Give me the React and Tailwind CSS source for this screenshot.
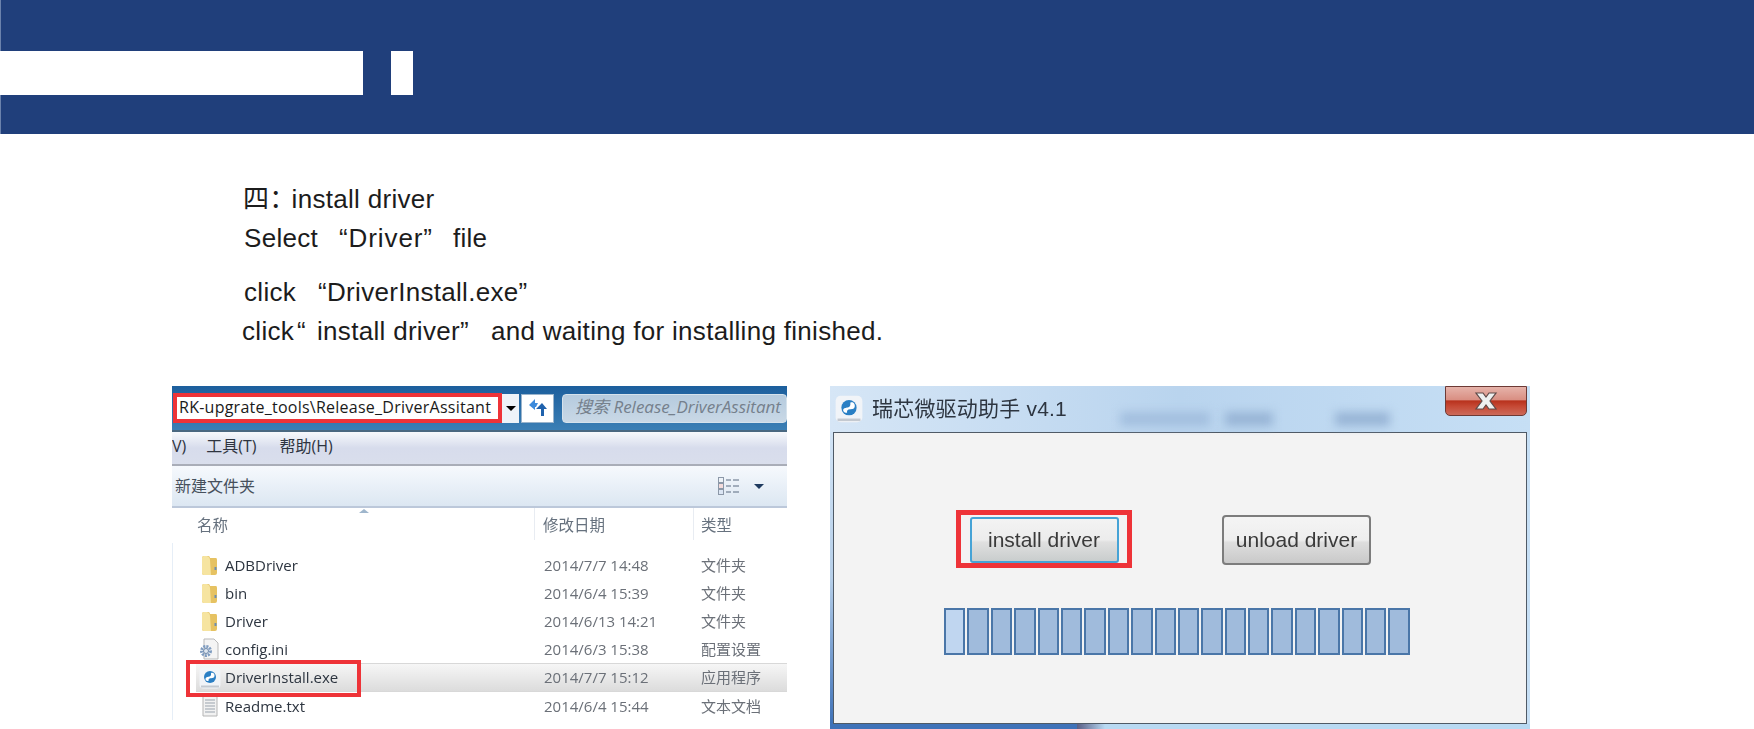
import React from "react";

const uiFont = "font-['Open_Sans','Noto_Sans_CJK_SC',sans-serif]";

const files = [
  { name: "ADBDriver", date: "2014/7/7 14:48", type: "文件夹", icon: "folder" },
  { name: "bin", date: "2014/6/4 15:39", type: "文件夹", icon: "folder" },
  { name: "Driver", date: "2014/6/13 14:21", type: "文件夹", icon: "folder" },
  { name: "config.ini", date: "2014/6/3 15:38", type: "配置设置", icon: "config" },
  { name: "DriverInstall.exe", date: "2014/7/7 15:12", type: "应用程序", icon: "exe", selected: true },
  { name: "Readme.txt", date: "2014/6/4 15:44", type: "文本文档", icon: "text" },
];

const FolderIcon = () => (
  <svg width="17" height="21" viewBox="0 0 17 21">
    <path d="M1 3 Q1 1 3 1 L7 1 Q9 1 9 3 L15 3 Q16 3 16 5 L16 18 Q16 20 14 20 L3 20 Q1 20 1 18 Z" fill="#e6c262" />
    <path d="M1 3 Q1 1 3 1 L6 1 Q9 2 9 5 L10 20 L3 20 Q1 20 1 18 Z" fill="#f6e4a0" />
    <rect x="13.5" y="12" width="2" height="3" fill="#6d8db0" />
  </svg>
);

const ConfigIcon = () => (
  <svg width="20" height="22" viewBox="0 0 20 22">
    <path d="M5 1 H15 L19 5 V21 H5 Z" fill="#f4f4f4" stroke="#b9b9b9" />
    <circle cx="7" cy="13" r="4.5" fill="none" stroke="#7f9cc0" strokeWidth="3" strokeDasharray="2 1" />
    <circle cx="7" cy="13" r="2.5" fill="#dfe7f0" stroke="#6d88aa" />
  </svg>
);

const ExeIcon = ({ size = 22 }) => (
  <svg width={size} height={size} viewBox="0 0 22 22">
    <rect x="0.5" y="0.5" width="21" height="21" rx="4" fill="#f1f4f8" />
    <circle cx="11" cy="10" r="6" fill="#2a7fc4" />
    <path d="M6.5 12.5 C6 8 13 12 12 6 C14 5 16 7 15.5 9 C15 13 9 9 9.5 14 C8 14 7 13.5 6.5 12.5 Z" fill="#ffffff" />
    <rect x="2" y="18.5" width="18" height="2" fill="#c4c9d0" />
  </svg>
);

const TextIcon = () => (
  <svg width="18" height="22" viewBox="0 0 18 22">
    <path d="M2 1 H16 V21 H2 Z" fill="#f2f2f2" stroke="#b5b5b5" />
    <path d="M4 5 H14 M4 8 H14 M4 11 H14 M4 14 H14 M4 17 H14" stroke="#9aa3ad" />
  </svg>
);

const RefreshIcon = () => (
  <svg width="20" height="20" viewBox="0 0 20 20">
    <path d="M1 7 L7 1 L7 5 L10 5 L8 9 L7 9 L7 12 Z" fill="#3d8bdc" />
    <path d="M8 11 L14 5 L19 11 L16 11 L16 18 L13 18 L13 11 Z" fill="#1f62ad" />
  </svg>
);

const ViewIcon = () => (
  <svg width="22" height="18" viewBox="0 0 22 18">
    <rect x="0.5" y="0.5" width="5" height="5" fill="#eef3f8" stroke="#8c98a8" />
    <rect x="0.5" y="6.5" width="5" height="5" fill="#f4dcdc" stroke="#8c98a8" />
    <rect x="0.5" y="12.5" width="5" height="5" fill="#dce6f4" stroke="#8c98a8" />
    <path d="M8 3 H13 M15 3 H21 M8 9 H13 M15 9 H21 M8 15 H13 M15 15 H21" stroke="#5a6a80" />
  </svg>
);

const CloseGlyph = () => (
  <svg width="26" height="18" viewBox="0 0 26 18">
    <path d="M3 1 H10 L13 5 L16 1 H23 L17 9 L23 17 H16 L13 13 L10 17 H3 L9 9 Z" fill="#eef0f0" stroke="#5e4a48" strokeWidth="1.2" />
  </svg>
);

const FileIcon = ({ type }) => {
  if (type === "folder") return <FolderIcon />;
  if (type === "config") return <div className="-ml-[2px]"><ConfigIcon /></div>;
  if (type === "exe") return <div className="-ml-[2px]"><ExeIcon /></div>;
  return <TextIcon />;
};

const FileRow = ({ file }) => (
  <div
    className={`flex items-center text-[15px] ${
      file.selected
        ? "h-[29px] ml-[23px] pl-[5px] bg-gradient-to-b from-[#f6f6f6] to-[#dcdcdc] border-y border-[#d8d8d8]"
        : "h-[28px] ml-[28px]"
    }`}
  >
    <div className="w-[24px] flex justify-start shrink-0">
      <FileIcon type={file.icon} />
    </div>
    <span className="w-[319px] shrink-0 text-[#2d3540]">{file.name}</span>
    <span className="w-[157px] shrink-0 text-[#6b7078]">{file.date}</span>
    <span className="text-[#6b7078]">{file.type}</span>
  </div>
);

const ExplorerShot = () => (
  <div className="w-[615px] h-[343px] overflow-hidden bg-white">
    <div className={`h-[343px] flex flex-col blur-[0.4px] ${uiFont}`}>
      {/* address bar */}
      <div className="h-[46px] shrink-0 bg-gradient-to-b from-[#1c5f9d] to-[#3b7fb5] border-b-2 border-[#4a6880] flex items-center pl-px">
        <div className="w-[329px] h-[30px] pl-[2px] pb-[2px] bg-white border-[4px] border-[#ee3338] flex items-center text-[16px] text-[#1a1a1a] tracking-[0.25px] whitespace-nowrap overflow-hidden">
          RK-upgrate_tools\Release_DriverAssitant
        </div>
        <div className="w-[17px] h-[29px] bg-[#eef3f8] flex items-center justify-center">
          <div className="w-0 h-0 border-x-[5px] border-x-transparent border-t-[5px] border-t-black" />
        </div>
        <div className="ml-[2px] w-[33px] h-[29px] bg-white border border-[#9ab4cc] flex items-center justify-center">
          <RefreshIcon />
        </div>
        <div className="ml-[8px] flex-1 h-[29px] bg-gradient-to-b from-[#b5cbde] to-[#c9d8e6] border border-[#d5e2ec] rounded-sm flex items-center pl-[12px] pb-[2px] text-[17px] italic text-[#75808c] whitespace-nowrap overflow-hidden">
          搜索 Release_DriverAssitant
        </div>
      </div>
      {/* menu */}
      <div className="h-[34px] shrink-0 pb-[4px] bg-gradient-to-b from-[#f7f9fc] via-[#d7dcec] to-[#d9deec] border-b-2 border-[#a9adb8] flex items-center text-[16px] text-[#2e3440]">
        <span>V)</span>
        <span className="ml-[20px]">工具(T)</span>
        <span className="ml-[23px]">帮助(H)</span>
      </div>
      {/* toolbar */}
      <div className="h-[42px] shrink-0 bg-gradient-to-b from-[#f6f9fd] to-[#dce7f2] border-b-2 border-[#bcc8da] flex items-center text-[16px] text-[#46505c]">
        <span className="ml-[3px]">新建文件夹</span>
        <div className="ml-auto mr-[23px] flex items-center gap-[14px]">
          <ViewIcon />
          <div className="w-0 h-0 border-x-[5px] border-x-transparent border-t-[5px] border-t-[#1f3a5f]" />
        </div>
      </div>
      {/* column headers */}
      <div className="h-[35px] shrink-0 relative flex items-center text-[15.5px] text-[#66717e]">
        <span className="ml-[25px] w-[346px]">名称</span>
        <span className="w-[158px]">修改日期</span>
        <span>类型</span>
        <div className="absolute left-[362px] top-0 w-px h-[32px] bg-[#e8ecf2]" />
        <div className="absolute left-[521px] top-0 w-px h-[32px] bg-[#e8ecf2]" />
        <div className="absolute left-[187px] top-[1px] w-0 h-0 border-x-[5px] border-x-transparent border-b-[4px] border-b-[#9fb6cc]" />
      </div>
      {/* file list */}
      <div className="pt-[8px] relative border-l border-[#e6eef7]">
        {files.map((file) => (
          <FileRow key={file.name} file={file} />
        ))}
        <div className="absolute left-[13px] top-[117px] w-[175px] h-[37px] border-[4px] border-[#ee3338]" />
      </div>
    </div>
  </div>
);

const InstallerShot = () => (
  <div className="w-[700px] h-[343px] overflow-hidden bg-[#c2dcf3]">
    <div className={`h-[343px] flex flex-col blur-[0.4px] bg-gradient-to-r from-[#d6e6f6] via-[#b9d4ee] to-[#c6dff5] ${uiFont}`}>
      {/* title bar */}
      <div className="h-[46px] shrink-0 flex items-start relative">
        <div className="mt-[9px] ml-[5px]">
          <ExeIcon size={28} />
        </div>
        <span className="ml-[9px] mt-[10px] text-[21px] leading-[26px] tracking-[0.2px] text-[#2d3540] font-['Liberation_Sans','Noto_Sans_CJK_SC',sans-serif]">
          瑞芯微驱动助手 v4.1
        </span>
        <div className="absolute left-[290px] top-[26px] w-[90px] h-[14px] bg-[#a3bfdf] blur-[5px]" />
        <div className="absolute left-[395px] top-[26px] w-[48px] h-[14px] bg-[#98b5d6] blur-[5px]" />
        <div className="absolute left-[505px] top-[26px] w-[55px] h-[14px] bg-[#98b5d6] blur-[5px]" />
        <div className="ml-auto mr-[3px] w-[82px] h-[30px] rounded-b-[5px] border border-[#6d3a35] bg-[linear-gradient(#e6b3aa,#d98f83_45%,#b8321d_50%,#c64a36_70%,#cc6a5a)] flex items-center justify-center">
          <CloseGlyph />
        </div>
      </div>
      {/* client area */}
      <div className="h-[292px] shrink-0 flex">
        <div className="w-[3px] shrink-0 bg-gradient-to-b from-[#d2e4f6] via-[#b6cfe9] to-[#3f72b8]" />
        <div className="flex-1 mr-[3px] bg-[#f3f3f3] border-[1.5px] border-[#4f5a66] flex flex-col">
          <div className="pt-[77px] flex font-['Liberation_Sans',sans-serif] text-[#3a3a3a] text-[21px]">
            <div className="ml-[122px] w-[176px] h-[58px] border-[5px] border-[#ee3338] flex items-end justify-center">
              <div className="w-[149px] h-[46px] shrink-0 rounded-[3px] border-[2px] border-[#46a3d6] bg-[linear-gradient(#f3f3f3,#ececec_50%,#e0e0e0_55%,#c9cdcd)] flex items-center justify-center">
                install driver
              </div>
            </div>
            <div className="ml-[90px] mt-[5px] w-[149px] h-[50px] rounded-[4px] border-[2px] border-[#7c7c7c] bg-[linear-gradient(#f4f4f4,#eeeeee_50%,#dedede_55%,#c9c9c9)] flex items-center justify-center">
              unload driver
            </div>
          </div>
          <div className="mt-[40px] ml-[110px] flex gap-[2px]">
            {Array.from({ length: 20 }).map((_, i) => (
              <div
                key={i}
                className={`w-[21.4px] h-[47px] border-2 border-[#4a76a8] ${i === 0 ? "bg-[#c0d6f0]" : "bg-[#a0bbdc]"}`}
              />
            ))}
          </div>
        </div>
      </div>
      {/* bottom of the window frame */}
      <div className="h-[5px] shrink-0 flex">
        <div className="w-[247px] bg-[#3f72b8]" />
        <div className="w-[28px] bg-gradient-to-r from-[#5a5f86] to-[#b8d9f2]" />
        <div className="flex-1 bg-[#b8d9f2]" />
      </div>
    </div>
  </div>
);

export default function App() {
  return (
    <div className="w-[1754px] h-[729px] overflow-hidden bg-white">
      <header className="h-[134px] bg-[#203f7b] border-l border-[#6b82ac] pt-[51px] flex items-start">
        <div className="-ml-px w-[363px] h-[44px] bg-white" />
        <div className="ml-[28px] w-[22px] h-[44px] bg-white" />
      </header>

      <section className="pt-[50px] h-[252px] text-[26px] tracking-[0.3px] leading-[30px] text-[#1c1c1c] whitespace-pre font-['Liberation_Sans','Noto_Sans_CJK_SC',sans-serif]">
        <p className="ml-[243px]">
          <span className="-mr-[4px]">四：</span>install driver
        </p>
        <p className="ml-[244px] mt-[9px]">
          Select<span className="ml-[21px] mr-[20px] tracking-[0.9px]">“Driver”</span>file
        </p>
        <p className="ml-[244px] mt-[24px]">
          click<span className="ml-[22px]">“DriverInstall.exe”</span>
        </p>
        <p className="ml-[242px] mt-[9px]">
          click<span className="ml-[3px]">“</span>
          <span className="ml-[11px] mr-[22px]">install driver”</span>
          and waiting for installing finished.
        </p>
      </section>

      <section className="flex ml-[172px] gap-[43px]">
        <ExplorerShot />
        <InstallerShot />
      </section>
    </div>
  );
}
